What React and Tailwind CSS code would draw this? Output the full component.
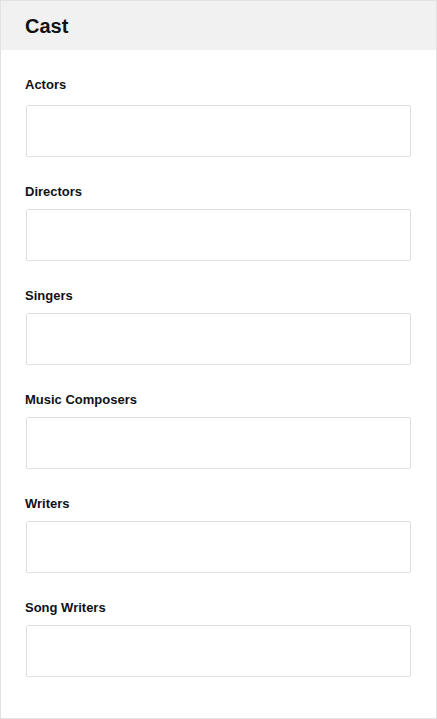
const fields = ['Actors', 'Directors', 'Singers', 'Music Composers', 'Writers', 'Song Writers'];

export default function App() {
    return (
        <div className="w-[437px] h-[719px] bg-white border border-[#e2e2e2] text-[#111116]" style={{ fontFamily: '"Liberation Sans", Arial, sans-serif' }}>
            <div className="h-[49px] bg-[#f1f1f1] flex items-center pl-[24px]">
                <h2 className="text-[20px] font-bold leading-none">Cast</h2>
            </div>
            <div className="px-[25px] pt-[26px] flex flex-col gap-[26px]">
                {fields.map((f, i) => (
                    <div key={f}>
                        <div className={`-ml-px pt-px text-[13px] font-bold leading-[16px] ${i === 0 ? 'mb-[12px]' : 'mb-[9px]'}`}>{f}</div>
                        <div className="h-[52px] border border-[#e0e0e0] rounded-[2px] bg-white"></div>
                    </div>
                ))}
            </div>
        </div>
    );
}
